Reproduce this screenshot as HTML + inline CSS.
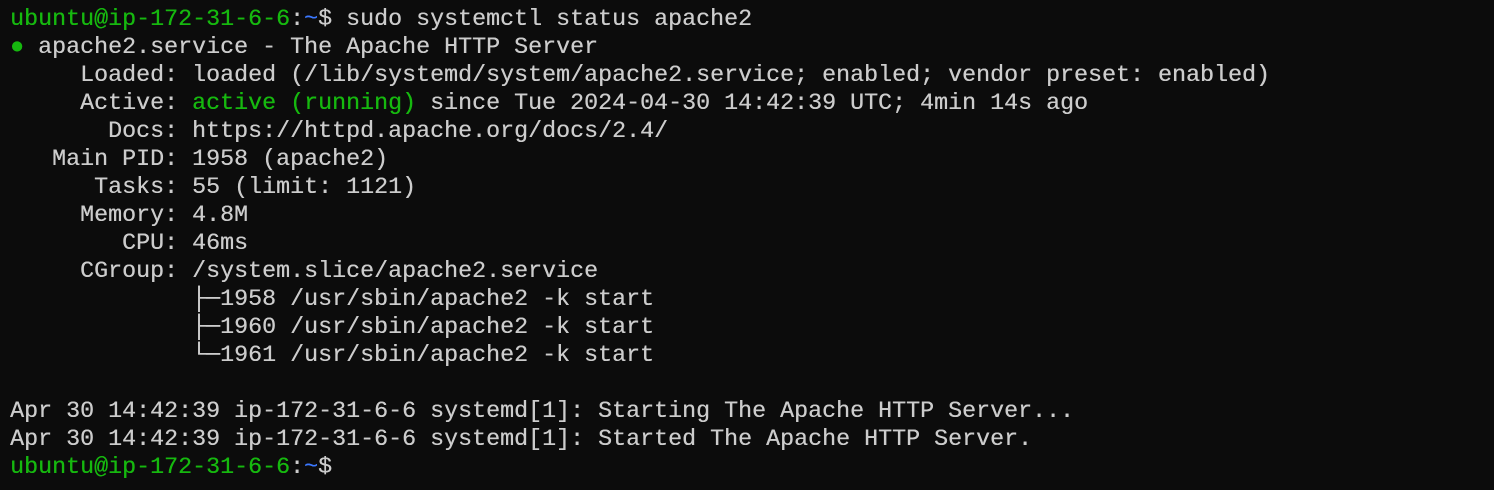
<!DOCTYPE html>
<html><head><style>
html,body{margin:0;padding:0;background:#0c0c0c;width:1494px;height:490px;overflow:hidden}
pre{margin:0;padding:6px 0 0 10px;font-family:"Liberation Mono","DejaVu Sans Mono",monospace;font-size:23.33px;line-height:28px;color:#cccccc;white-space:pre;text-shadow:0.3px 0 0 currentColor}
.g{color:#16b80f}.b{color:#3b78ff}
</style></head><body><pre><span class="g">ubuntu@ip-172-31-6-6</span>:<span class="b">~</span>$ sudo systemctl status apache2
<span class="g">●</span> apache2.service - The Apache HTTP Server
     Loaded: loaded (/lib/systemd/system/apache2.service; enabled; vendor preset: enabled)
     Active: <span class="g">active (running)</span> since Tue 2024-04-30 14:42:39 UTC; 4min 14s ago
       Docs: https://httpd.apache.org/docs/2.4/
   Main PID: 1958 (apache2)
      Tasks: 55 (limit: 1121)
     Memory: 4.8M
        CPU: 46ms
     CGroup: /system.slice/apache2.service
             ├─1958 /usr/sbin/apache2 -k start
             ├─1960 /usr/sbin/apache2 -k start
             └─1961 /usr/sbin/apache2 -k start

Apr 30 14:42:39 ip-172-31-6-6 systemd[1]: Starting The Apache HTTP Server...
Apr 30 14:42:39 ip-172-31-6-6 systemd[1]: Started The Apache HTTP Server.
<span class="g">ubuntu@ip-172-31-6-6</span>:<span class="b">~</span>$</pre></body></html>
